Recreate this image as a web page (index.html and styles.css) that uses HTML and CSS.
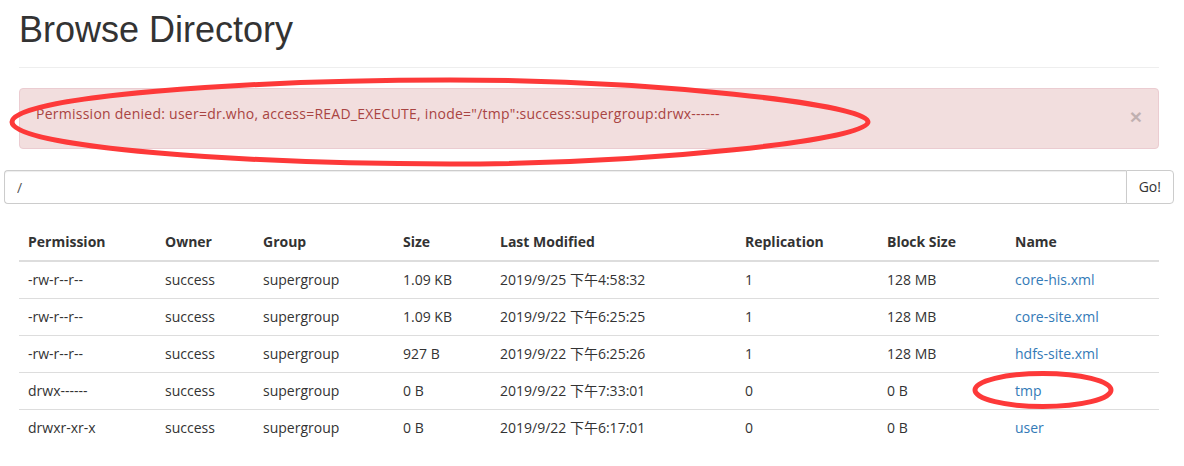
FILE: index.html
```html
<!DOCTYPE html>
<html lang="zh-CN">
<head>
<meta charset="utf-8">
<title>Browse Directory</title>
<link rel="stylesheet" href="styles.css">
</head>
<body>
<div class="page">
  <div class="page-header">
    <h1>Browse Directory</h1>
  </div>

  <div class="alert">
    <div class="alert-body">Permission denied: user=dr.who, access=READ_EXECUTE, inode="/tmp":success:supergroup:drwx------</div>
    <button type="button" class="close">&times;</button>
  </div>

  <div class="input-group">
    <input class="path-input" type="text" value="/">
    <button type="button" class="go-btn">Go!</button>
  </div>

  <table class="listing">
    <thead>
      <tr>
        <th class="c-perm">Permission</th>
        <th class="c-owner">Owner</th>
        <th class="c-group">Group</th>
        <th class="c-size">Size</th>
        <th class="c-mod">Last Modified</th>
        <th class="c-rep">Replication</th>
        <th class="c-block">Block Size</th>
        <th class="c-name">Name</th>
      </tr>
    </thead>
    <tbody>
      <tr>
        <td>-rw-r--r--</td><td>success</td><td>supergroup</td><td>1.09 KB</td>
        <td>2019/9/25 下午4:58:32</td><td>1</td><td>128 MB</td><td><a href="#">core-his.xml</a></td>
      </tr>
      <tr>
        <td>-rw-r--r--</td><td>success</td><td>supergroup</td><td>1.09 KB</td>
        <td>2019/9/22 下午6:25:25</td><td>1</td><td>128 MB</td><td><a href="#">core-site.xml</a></td>
      </tr>
      <tr>
        <td>-rw-r--r--</td><td>success</td><td>supergroup</td><td>927 B</td>
        <td>2019/9/22 下午6:25:26</td><td>1</td><td>128 MB</td><td><a href="#">hdfs-site.xml</a></td>
      </tr>
      <tr>
        <td>drwx------</td><td>success</td><td>supergroup</td><td>0 B</td>
        <td>2019/9/22 下午7:33:01</td><td>0</td><td>0 B</td><td><a href="#">tmp</a></td>
      </tr>
      <tr>
        <td>drwxr-xr-x</td><td>success</td><td>supergroup</td><td>0 B</td>
        <td>2019/9/22 下午6:17:01</td><td>0</td><td>0 B</td><td><a href="#">user</a></td>
      </tr>
    </tbody>
  </table>
</div>

<svg class="annotations" width="1184" height="466" viewBox="0 0 1184 466" xmlns="http://www.w3.org/2000/svg">
  <path d="M12,122 C12,96 250,80 450,80 C650,80 868,104 868,122 C868,140 650,164 450,164 C250,164 12,148 12,122 Z" fill="none" stroke="#fd3939" stroke-width="5"/>
  <ellipse cx="1043" cy="390" rx="68" ry="16.5" fill="none" stroke="#fd3939" stroke-width="5"/>
</svg>
</body>
</html>
```

FILE: styles.css
```css
html, body {
  margin: 0;
  padding: 0;
  background: #fff;
}

body {
  font-family: "Open Sans", "Noto Sans CJK SC", sans-serif;
  font-size: 14px;
  line-height: 20px;
  color: #333;
  width: 1184px;
  height: 466px;
  overflow: hidden;
  position: relative;
}

.page {
  padding: 0 25px 0 19px;
}

.page-header {
  border-bottom: 1px solid #eee;
  padding-bottom: 17px;
  margin-bottom: 20px;
}

.page-header h1 {
  margin: 10px 0 0 0;
  font-family: "Liberation Sans", Arial, sans-serif;
  font-weight: 400;
  font-size: 36px;
  line-height: 40px;
  color: #333;
}

.alert {
  display: flex;
  justify-content: space-between;
  align-items: flex-start;
  height: 20px;
  background: #f2dede;
  border: 1px solid #ebccd1;
  border-radius: 4px;
  color: #a94442;
  padding: 15px 16px 24px 15px;
  margin-bottom: 21px;
}

.alert-body {
  padding-left: 1px;
  letter-spacing: 0.25px;
}

.close {
  background: none;
  border: 0;
  padding: 0;
  margin: 2px 0 -5px 0;
  font-family: "Liberation Sans", Arial, sans-serif;
  font-size: 21px;
  font-weight: 700;
  line-height: 1;
  color: #000;
  opacity: 0.2;
  cursor: pointer;
}

.input-group {
  display: flex;
  margin: 0 -15px 20px -15px;
  height: 34px;
}

.path-input {
  flex: 1;
  box-sizing: border-box;
  height: 34px;
  margin: 0;
  padding: 6px 12px;
  border: 1px solid #ccc;
  border-right: 0;
  border-radius: 4px 0 0 4px;
  font-family: "Open Sans", sans-serif;
  font-size: 14px;
  color: #555;
  box-shadow: inset 0 1px 1px rgba(0, 0, 0, 0.075);
  outline: none;
}

.go-btn {
  box-sizing: border-box;
  height: 34px;
  margin: 0;
  padding: 6px 12px;
  border: 1px solid #ccc;
  border-radius: 0 4px 4px 0;
  background: #fff;
  font-family: "Open Sans", sans-serif;
  font-size: 14px;
  line-height: 20px;
  color: #333;
}

.listing {
  width: 100%;
  border-collapse: collapse;
  border-spacing: 0;
}

.listing th {
  text-align: left;
  font-weight: 700;
  padding: 8px 8px 8px 9px;
  line-height: 20px;
  border-bottom: 2px solid #ddd;
  vertical-align: bottom;
}

.listing td {
  padding: 8px 8px 8px 9px;
  line-height: 20px;
  border-top: 1px solid #ddd;
  vertical-align: top;
  white-space: nowrap;
}

.c-perm { width: 120px; }
.c-owner { width: 81px; }
.c-group { width: 123px; }
.c-size { width: 80px; }
.c-mod { width: 228px; }
.c-rep { width: 125px; }
.c-block { width: 111px; }

.listing a {
  color: #337ab7;
  text-decoration: none;
}

.annotations {
  position: absolute;
  top: 0;
  left: 0;
  pointer-events: none;
}
```
